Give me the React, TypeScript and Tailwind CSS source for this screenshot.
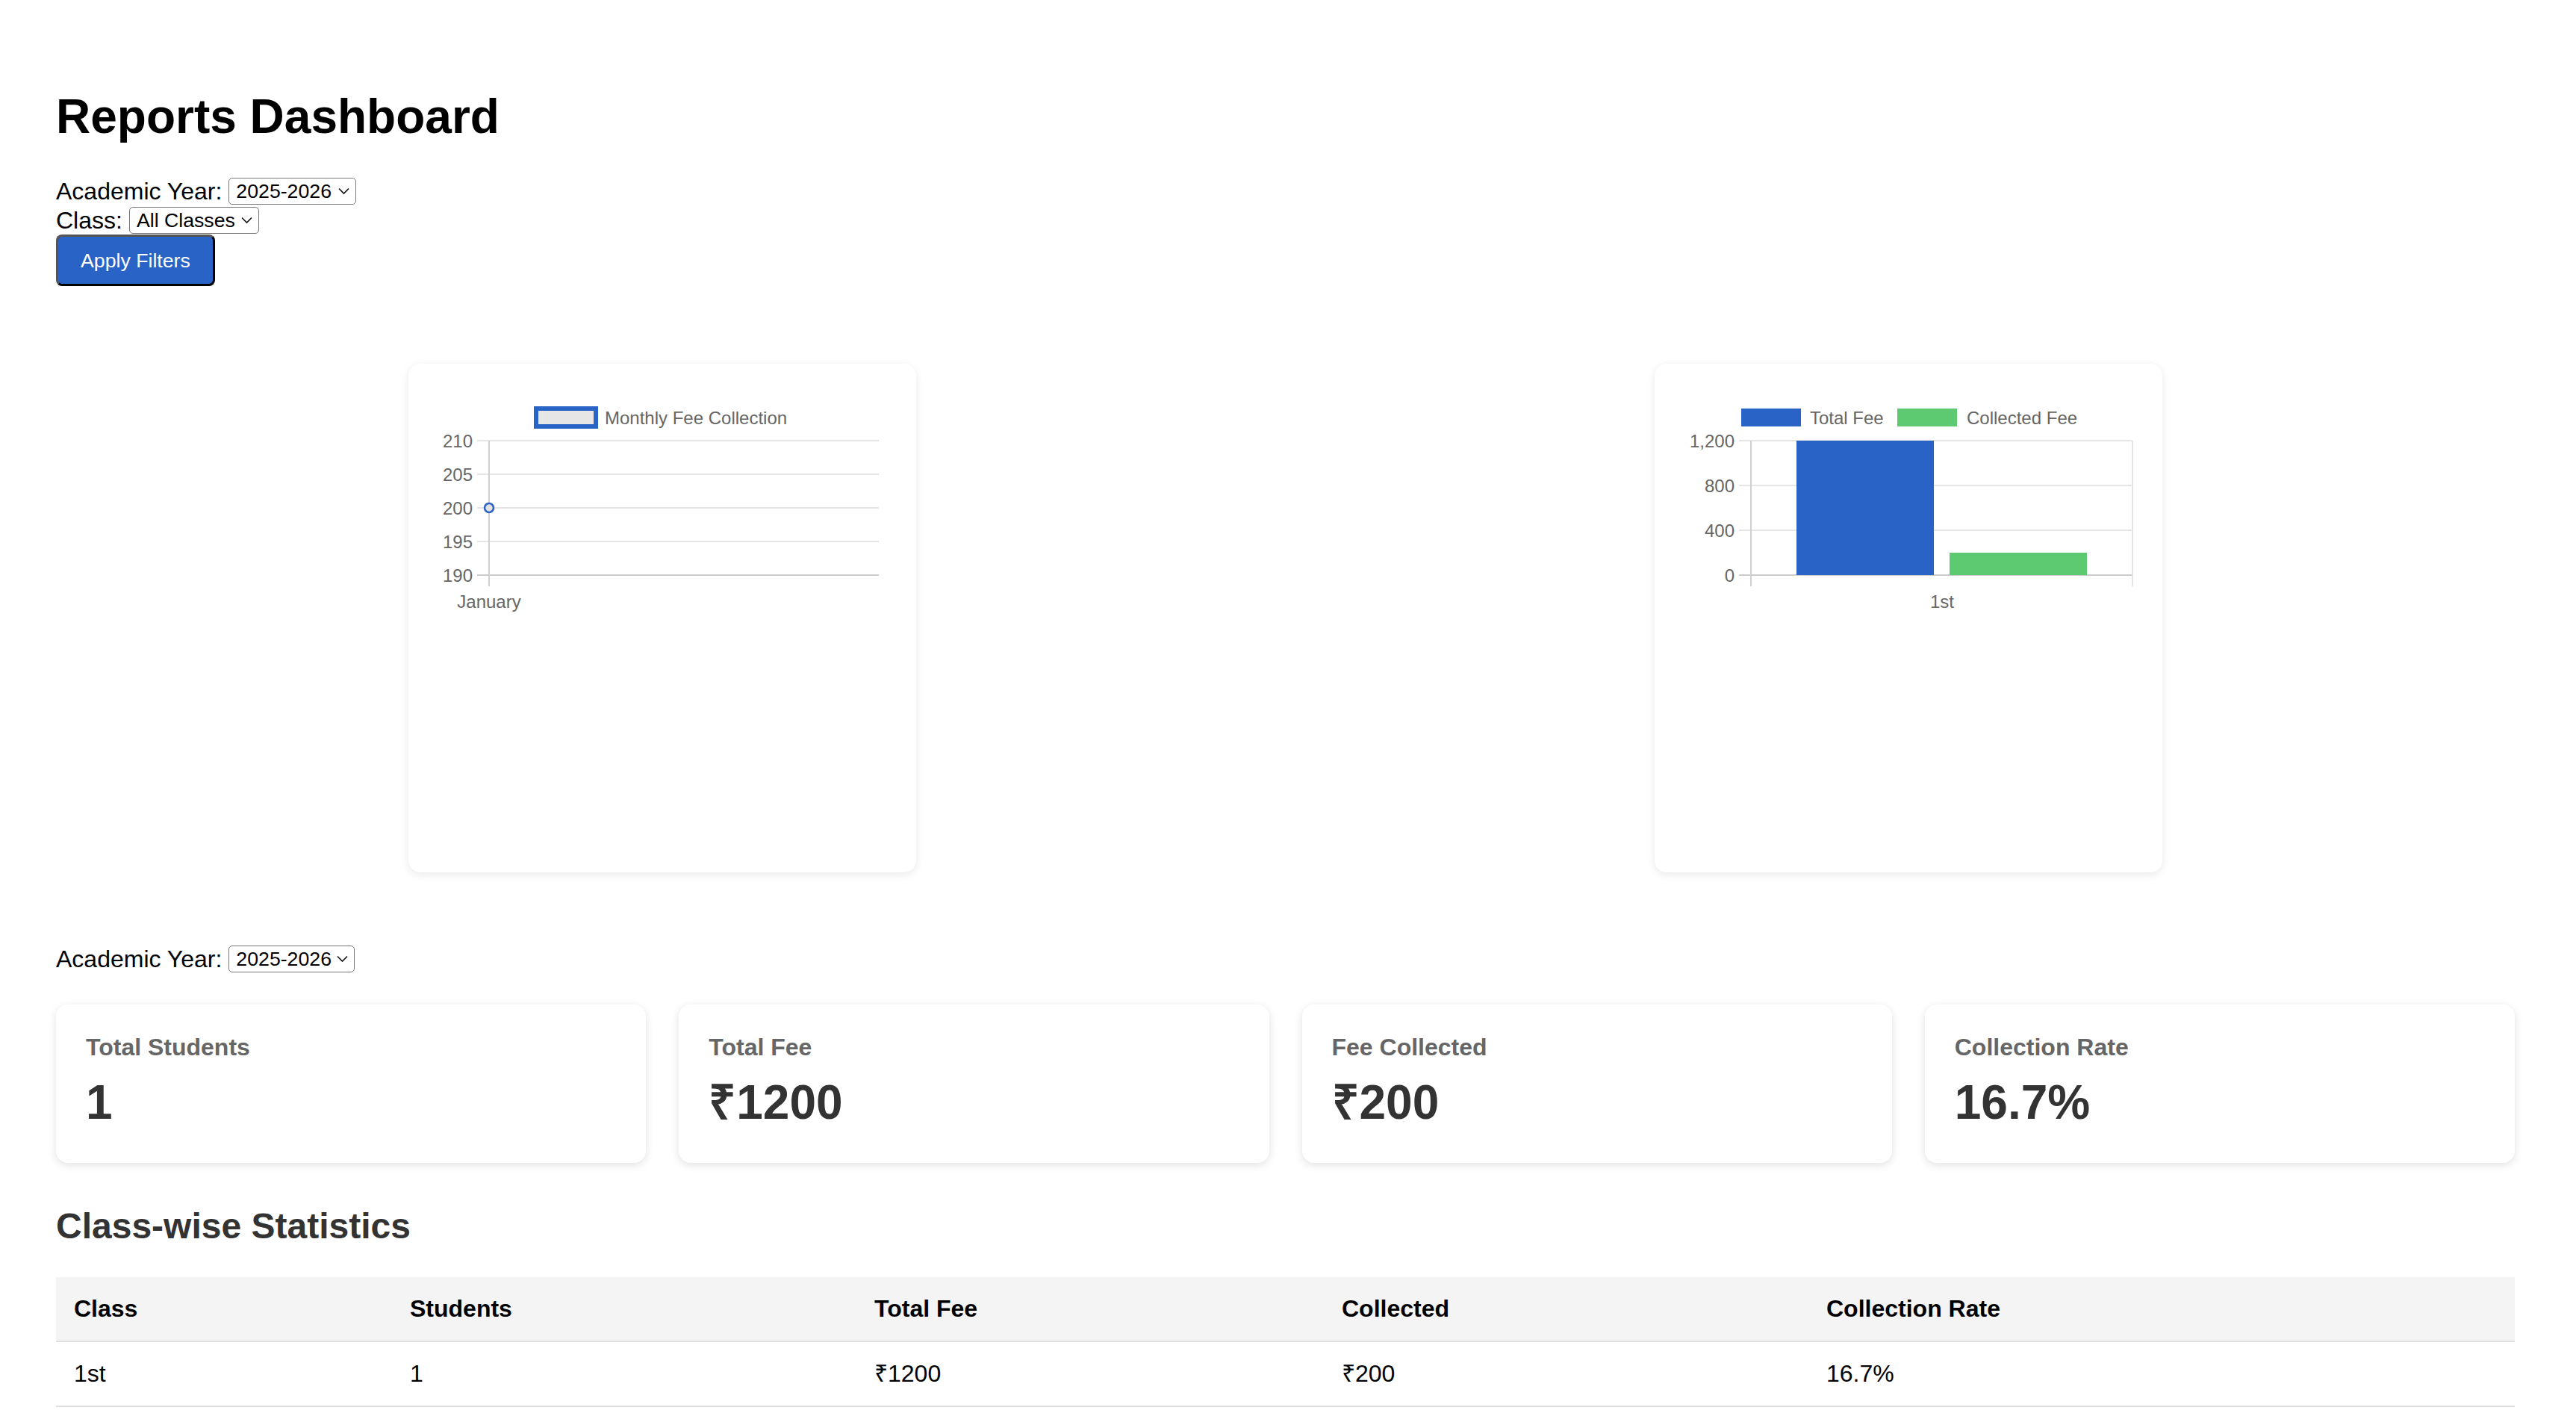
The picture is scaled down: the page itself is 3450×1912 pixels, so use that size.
import type React from 'react'

const BLUE = '#2a63c6'
const GREEN = '#5dc970'

interface SelectProps {
	value: string
	width: string
}

const FakeSelect: React.FC<SelectProps> = ({ value, width }) => (
	<span className={`relative inline-block ${width}`}>
		<select
			defaultValue={value}
			className="block h-[36px] w-full appearance-none rounded-[5px] border-[1.5px] border-[#767676] bg-white pl-[9px] pr-[30px] text-[26.7px] leading-[32px] text-black"
		>
			<option>{value}</option>
		</select>
		<svg
			className="pointer-events-none absolute right-[9px] top-[13px]"
			width="15"
			height="10"
			viewBox="0 0 15 10"
			fill="none"
		>
			<path d="M1 1.5 L7.5 8 L14 1.5" stroke="#111" strokeWidth="1.6" />
		</svg>
	</span>
)

const LineChart = () => {
	const ticks = [
		{ label: '210', y: 103 },
		{ label: '205', y: 148 },
		{ label: '200', y: 193 },
		{ label: '195', y: 238 },
		{ label: '190', y: 283 },
	]
	return (
		<svg width="680" height="340" viewBox="0 0 680 340" fontFamily="'Liberation Sans', Arial, sans-serif">
			<rect x="171" y="60" width="80" height="24" fill="#e6e6e6" stroke={BLUE} strokeWidth="6" />
			<text x="263" y="72" dominantBaseline="central" fontSize="24" fill="#666">
				Monthly Fee Collection
			</text>
			{ticks.map((t, i) => (
				<g key={t.label}>
					<line
						x1="92"
						x2="630"
						y1={t.y}
						y2={t.y}
						stroke={i === ticks.length - 1 ? '#cccccc' : '#e5e5e5'}
						strokeWidth="2"
					/>
					<text x="86" y={t.y} textAnchor="end" dominantBaseline="central" fontSize="24" fill="#666">
						{t.label}
					</text>
				</g>
			))}
			<line x1="108" x2="108" y1="103" y2="298" stroke="#d0d0d0" strokeWidth="2" />
			<circle cx="108" cy="193" r="6" fill="#e2e2e2" stroke={BLUE} strokeWidth="2.5" />
			<text x="108" y="318" textAnchor="middle" dominantBaseline="central" fontSize="24" fill="#666">
				January
			</text>
		</svg>
	)
}

const BarChart = () => {
	const ticks = [
		{ label: '1,200', y: 103 },
		{ label: '800', y: 163 },
		{ label: '400', y: 223 },
		{ label: '0', y: 283 },
	]
	return (
		<svg width="680" height="340" viewBox="0 0 680 340" fontFamily="'Liberation Sans', Arial, sans-serif">
			<rect x="116" y="60" width="80" height="24" fill={BLUE} />
			<text x="208" y="72" dominantBaseline="central" fontSize="24" fill="#666">
				Total Fee
			</text>
			<rect x="325" y="60" width="80" height="24" fill={GREEN} />
			<text x="418" y="72" dominantBaseline="central" fontSize="24" fill="#666">
				Collected Fee
			</text>
			{ticks.map((t, i) => (
				<g key={t.label}>
					<line
						x1="113"
						x2="640"
						y1={t.y}
						y2={t.y}
						stroke={i === ticks.length - 1 ? '#cccccc' : '#e5e5e5'}
						strokeWidth="2"
					/>
					<text x="107" y={t.y} textAnchor="end" dominantBaseline="central" fontSize="24" fill="#666">
						{t.label}
					</text>
				</g>
			))}
			<line x1="129" x2="129" y1="103" y2="298" stroke="#d0d0d0" strokeWidth="2" />
			<line x1="640" x2="640" y1="103" y2="298" stroke="#e5e5e5" strokeWidth="2" />
			<rect x="190" y="103" width="184" height="180" fill={BLUE} />
			<rect x="395" y="253" width="184" height="30" fill={GREEN} />
			<text x="385" y="318" textAnchor="middle" dominantBaseline="central" fontSize="24" fill="#666">
				1st
			</text>
		</svg>
	)
}

const stats = [
	{ label: 'Total Students', value: '1' },
	{ label: 'Total Fee', value: '₹1200' },
	{ label: 'Fee Collected', value: '₹200' },
	{ label: 'Collection Rate', value: '16.7%' },
]

const rows = [{ cls: '1st', students: '1', total: '₹1200', collected: '₹200', rate: '16.7%' }]

export default function App() {
	return (
		<div className="min-h-screen bg-white font-['Liberation_Sans',Arial,sans-serif] text-black">
			<div className="pl-[75px] pr-[82px] pt-[119px] pb-[40px]">
				<h1 className="text-[64px] font-bold leading-[74px]">Reports Dashboard</h1>

				<div className="mt-[43px] text-[32px]">
					<div className="flex h-[39px] items-center gap-[9px]">
						<label>Academic Year:</label>
						<FakeSelect value="2025-2026" width="w-[171px]" />
					</div>
					<div className="flex h-[39px] items-center gap-[9px]">
						<label>Class:</label>
						<FakeSelect value="All Classes" width="w-[174px]" />
					</div>
					<button className="block h-[69px] rounded-[8px] border-[3px] border-[#555] border-b-black border-r-black bg-[#2a63c6] px-[30px] text-[26.7px] leading-[32px] text-white">
						Apply Filters
					</button>
				</div>

				<div className="mt-[104px] grid grid-cols-2 gap-[44px]">
					<div className="mx-auto h-[681px] w-[680px] rounded-[16px] bg-white shadow-[0_3px_12px_rgba(0,0,0,0.09)]">
						<LineChart />
					</div>
					<div className="mx-auto h-[681px] w-[680px] rounded-[16px] bg-white shadow-[0_3px_12px_rgba(0,0,0,0.09)]">
						<BarChart />
					</div>
				</div>

				<div className="mt-[96px] flex h-[39px] items-center gap-[9px] text-[32px]">
					<label>Academic Year:</label>
					<FakeSelect value="2025-2026" width="w-[169px]" />
				</div>

				<div className="mt-[42px] grid grid-cols-4 gap-[44px]">
					{stats.map((s) => (
						<div
							key={s.label}
							className="h-[212px] rounded-[16px] bg-white px-[40px] pt-[39px] shadow-[0_3px_12px_rgba(0,0,0,0.12)]"
						>
							<div className="text-[32px] font-bold leading-[37px] text-[#666]">{s.label}</div>
							<div className="mt-[18px] text-[64px] font-bold leading-[74px] text-[#333]">{s.value}</div>
						</div>
					))}
				</div>

				<h2 className="mt-[57px] text-[48px] font-bold leading-[55px] text-[#333]">Class-wise Statistics</h2>

				<table className="mt-[41px] w-full table-fixed border-collapse text-left text-[32px] leading-[37px]">
					<thead>
						<tr className="bg-[#f4f4f4]">
							<th className="w-[450px] border-b-2 border-[#ddd] p-[24px] font-bold">Class</th>
							<th className="w-[622px] border-b-2 border-[#ddd] p-[24px] font-bold">Students</th>
							<th className="w-[626px] border-b-2 border-[#ddd] p-[24px] font-bold">Total Fee</th>
							<th className="w-[649px] border-b-2 border-[#ddd] p-[24px] font-bold">Collected</th>
							<th className="border-b-2 border-[#ddd] p-[24px] font-bold">Collection Rate</th>
						</tr>
					</thead>
					<tbody>
						{rows.map((r) => (
							<tr key={r.cls}>
								<td className="border-b-2 border-[#ddd] p-[24px]">{r.cls}</td>
								<td className="border-b-2 border-[#ddd] p-[24px]">{r.students}</td>
								<td className="border-b-2 border-[#ddd] p-[24px]">{r.total}</td>
								<td className="border-b-2 border-[#ddd] p-[24px]">{r.collected}</td>
								<td className="border-b-2 border-[#ddd] p-[24px]">{r.rate}</td>
							</tr>
						))}
					</tbody>
				</table>
			</div>
		</div>
	)
}
